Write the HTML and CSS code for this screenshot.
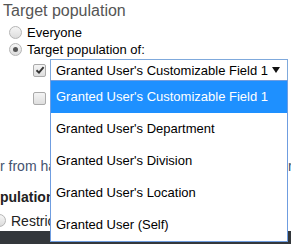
FILE: index.html
```html
<!DOCTYPE html>
<html lang="en">
  <head>
    <meta charset="UTF-8" />
    <meta name="viewport" content="width=device-width, initial-scale=1.0" />
    <title>Target population</title>
    <link rel="stylesheet" href="styles.css">
  </head>
  <body>
    <div class="panel">
      <div class="title">Target population</div>
      <label class="opt"><span class="radio"></span>Everyone</label>
      <label class="opt"><span class="radio on"></span>Target population of:</label>

      <div class="field-row">
        <span class="check on">
          <svg width="10" height="10" viewBox="0 0 10 10"><path d="M1.5 5.2 L4 7.6 L8.6 2.2" fill="none" stroke="#333" stroke-width="1.9"/></svg>
        </span>
        <div class="select-wrap">
          <div class="select">
            <span>Granted User's Customizable Field 1</span>
            <svg class="arrow" width="8" height="6" viewBox="0 0 8 6"><polygon points="0,0 8,0 4,6" fill="#111"/></svg>
          </div>
          <ul class="menu">
            <li class="active">Granted User's Customizable Field 1</li>
            <li>Granted User's Department</li>
            <li>Granted User's Division</li>
            <li>Granted User's Location</li>
            <li>Granted User (Self)</li>
          </ul>
        </div>
      </div>

      <div class="field-row second">
        <span class="check"></span>
      </div>

      <p class="note"><span class="clip">r from having</span><span class="tail">r</span></p>
      <div class="subhead"><span class="clip">pulation</span></div>
      <label class="opt cut"><span class="radio"></span><span class="clip">Restrict</span></label>
    </div>
    <div class="footer"></div>
  </body>
</html>
```

FILE: styles.css
```css
html, body {
  margin: 0;
  padding: 0;
  overflow: hidden;
}
body {
  font-family: "Liberation Sans", Arial, sans-serif;
  width: 291px;
  height: 244px;
  background: #fff;
  color: #000;
}
.panel {
  position: relative;
  z-index: 1;
}
.title {
  font-size: 16px;
  color: #555;
  padding: 2px 0 0 3px;
  height: 22px;
  line-height: 18px;
}
.opt {
  display: flex;
  align-items: center;
  height: 17px;
  padding-left: 9px;
  font-size: 13px;
  gap: 5px;
}
.radio {
  width: 11px;
  height: 11px;
  border: 1px solid #b5b5b5;
  border-radius: 50%;
  background: linear-gradient(#f6f6f6, #dcdcdc);
  display: inline-flex;
  align-items: center;
  justify-content: center;
  flex: none;
}
.radio.on::after {
  content: "";
  width: 5px;
  height: 5px;
  border-radius: 50%;
  background: #555;
}
.field-row {
  display: flex;
  align-items: center;
  padding-left: 33px;
  margin-top: 1px;
  gap: 4px;
}
.field-row.second {
  margin-top: 6px;
  height: 23px;
}
.check {
  width: 11px;
  height: 11px;
  border: 1px solid #aaa;
  border-radius: 2px;
  background: linear-gradient(#f4f4f4, #dedede);
  display: inline-flex;
  align-items: center;
  justify-content: center;
  flex: none;
}
.select-wrap {
  position: relative;
  width: 238px;
}
.select {
  display: flex;
  justify-content: space-between;
  align-items: center;
  height: 20px;
  border: 1px solid #7fa9dc;
  padding: 0 7px 0 5px;
  font-size: 13px;
  white-space: nowrap;
  background: #fff;
}
.menu {
  position: absolute;
  top: 21px;
  left: 0;
  width: 236px;
  margin: 0;
  padding: 0;
  list-style: none;
  border: 1px solid #6f9de0;
  background: #fff;
}
.menu li {
  height: 32px;
  line-height: 32px;
  padding-left: 5px;
  font-size: 13px;
  white-space: nowrap;
}
.menu li.active {
  background: #1e90ff;
  color: #fff;
}
.clip {
  display: inline-block;
  overflow: hidden;
  white-space: nowrap;
  vertical-align: top;
}
.note {
  display: flex;
  justify-content: space-between;
  margin: 48px 0 0 0;
  font-size: 14px;
  color: #44536f;
  line-height: 16px;
}
.note .clip {
  width: 50px;
}
.note .tail {
  width: 3px;
  overflow: hidden;
}
.subhead {
  margin-top: 15px;
  font-size: 14px;
  font-weight: bold;
  color: #222;
  line-height: 16px;
}
.subhead .clip {
  width: 50px;
}
.opt.cut {
  padding-left: 0;
  margin-left: -7px;
  margin-top: 7px;
  font-size: 14px;
  color: #222;
}
.opt.cut .clip {
  width: 45px;
}
.footer {
  margin-top: 2px;
  height: 13px;
  background: #33373b;
}
```
